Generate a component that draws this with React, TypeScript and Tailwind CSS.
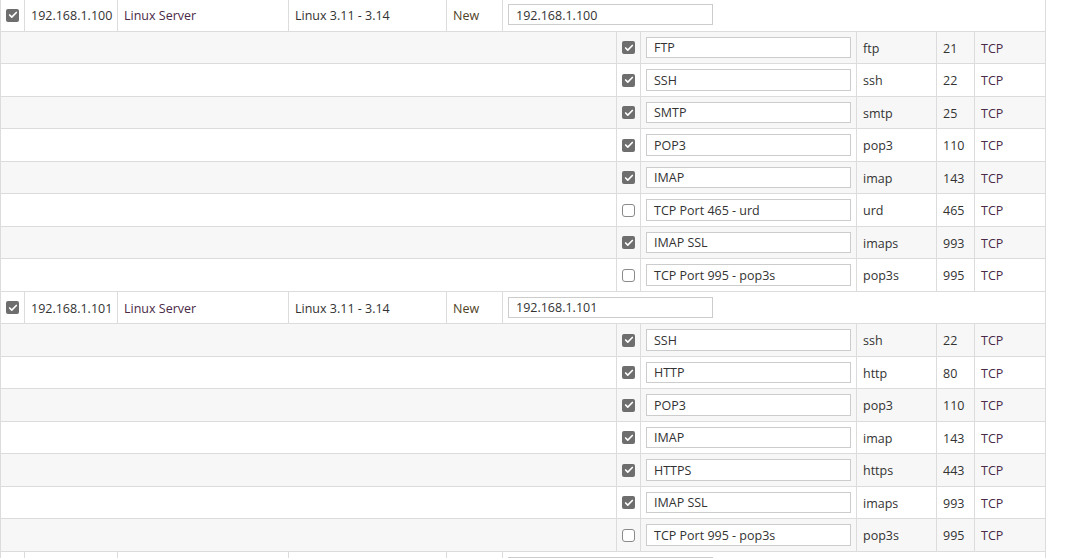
import { Check } from "lucide-react"

type Service = { label: string; name: string; port: number; on: boolean }
type Host = { ip: string; services: Service[] }

const hosts: Host[] = [
  {
    ip: "192.168.1.100",
    services: [
      { label: "FTP", name: "ftp", port: 21, on: true },
      { label: "SSH", name: "ssh", port: 22, on: true },
      { label: "SMTP", name: "smtp", port: 25, on: true },
      { label: "POP3", name: "pop3", port: 110, on: true },
      { label: "IMAP", name: "imap", port: 143, on: true },
      { label: "TCP Port 465 - urd", name: "urd", port: 465, on: false },
      { label: "IMAP SSL", name: "imaps", port: 993, on: true },
      { label: "TCP Port 995 - pop3s", name: "pop3s", port: 995, on: false },
    ],
  },
  {
    ip: "192.168.1.101",
    services: [
      { label: "SSH", name: "ssh", port: 22, on: true },
      { label: "HTTP", name: "http", port: 80, on: true },
      { label: "POP3", name: "pop3", port: 110, on: true },
      { label: "IMAP", name: "imap", port: 143, on: true },
      { label: "HTTPS", name: "https", port: 443, on: true },
      { label: "IMAP SSL", name: "imaps", port: 993, on: true },
      { label: "TCP Port 995 - pop3s", name: "pop3s", port: 995, on: false },
    ],
  },
]

function Box({ on }: { on: boolean }) {
  if (on) {
    return (
      <span className="flex h-[13px] w-[13px] items-center justify-center rounded-[2px] bg-[#6e6e6e]">
        <Check className="h-[10px] w-[10px] text-white" strokeWidth={4} />
      </span>
    )
  }
  return <span className="block h-[13px] w-[13px] rounded-[3px] border border-[#8a8a8a] bg-white" />
}

const cell = "flex shrink-0 items-center border-r border-[#dcdcdc]"
const txt = "pt-[4px]"

function HostRow({ ip, blank }: { ip: string; blank?: boolean }) {
  return (
    <div className="flex h-[32.5px] border-b border-[#dcdcdc] bg-white">
      <div className={`${cell} w-[24px] justify-center pt-[1px]`}>{!blank && <Box on />}</div>
      <div className={`${cell} ${txt} w-[93px] pl-[6px]`}>{!blank && ip}</div>
      <div className={`${cell} ${txt} w-[171px] pl-[6px] text-[#4a2a48]`}>{!blank && "Linux Server"}</div>
      <div className={`${cell} ${txt} w-[158px] pl-[6px]`}>{!blank && "Linux 3.11 - 3.14"}</div>
      <div className={`${cell} ${txt} w-[56px] pl-[6px] text-[#4f4226]`}>{!blank && "New"}</div>
      <div className="flex flex-1 items-center pl-[5px]">
        <div className="flex h-[21px] w-[205px] items-center border border-[#cccccc] bg-white pl-[7px] pt-[3px]">
          {!blank && ip}
        </div>
      </div>
    </div>
  )
}

function ServiceRow({ s, grey }: { s: Service; grey: boolean }) {
  return (
    <div className={`flex h-[32.5px] border-b border-[#dcdcdc] ${grey ? "bg-[#f7f7f7]" : "bg-white"}`}>
      <div className="w-[616px] shrink-0 border-r border-[#dcdcdc]" />
      <div className={`${cell} w-[24px] justify-center pt-[1px]`}>
        <Box on={s.on} />
      </div>
      <div className={`${cell} w-[216px] pl-[5px]`}>
        <div className="flex h-[21.5px] w-[205px] items-center border border-[#cccccc] bg-white pl-[7px] pt-[3px]">
          {s.label}
        </div>
      </div>
      <div className={`${cell} ${txt} w-[80px] pl-[6px]`}>{s.name}</div>
      <div className={`${cell} ${txt} w-[38px] pl-[6px]`}>{s.port}</div>
      <div className={`flex flex-1 items-center ${txt} pl-[6px] text-[#4a2a48]`}>TCP</div>
    </div>
  )
}

export default function App() {
  return (
    <div className="h-[558px] overflow-hidden bg-white">
      <div
        className="-mt-px w-[1046px] border-x border-[#dcdcdc] text-[12.5px] text-[#333333]"
        style={{ fontFamily: '"Open Sans", "Noto Sans", sans-serif' }}
      >
        {hosts.map((h) => (
          <div key={h.ip}>
            <HostRow ip={h.ip} />
            {h.services.map((s, i) => (
              <ServiceRow key={s.label + i} s={s} grey={i % 2 === 0} />
            ))}
          </div>
        ))}
        <HostRow ip="" blank />
      </div>
    </div>
  )
}
